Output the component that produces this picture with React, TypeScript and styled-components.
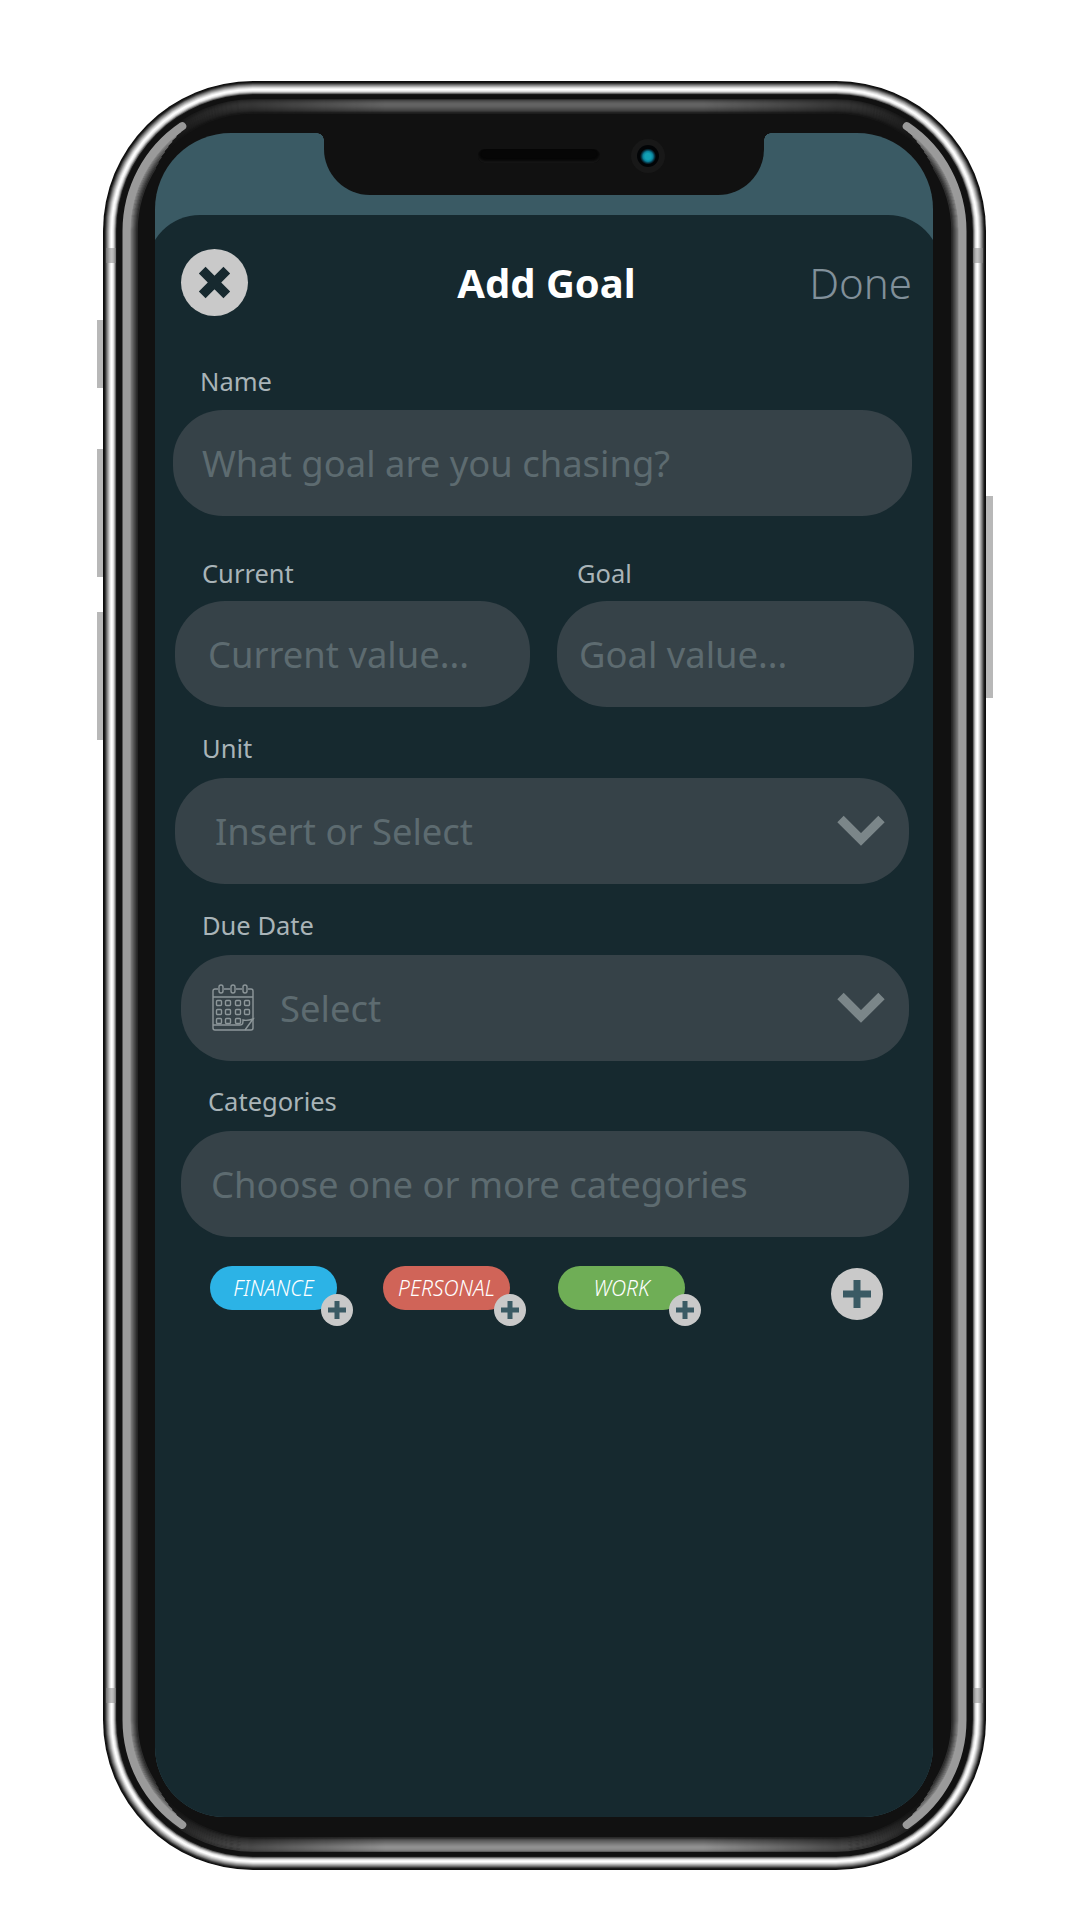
import styled, { createGlobalStyle } from 'styled-components'

const FONT = `'Noto Sans', 'Liberation Sans', sans-serif`

const GlobalStyle = createGlobalStyle`
  html, body {
    margin: 0;
    background: #fff;
  }
  * {
    box-sizing: border-box;
  }
`

const W = 883
const H = 1789
const R = 150

const rimColors = [
  '#0c0c0c', '#181818', '#3a3a3a', '#666666', '#8c8c8c', '#b0b0b0', '#d4d4d4', '#eeeeee',
  '#ffffff', '#f4f4f4', '#dcdcdc', '#aaaaaa', '#6a6a6a', '#1a1a1a',
]
const topBand = ['#3c3c3c', '#4c4c4c', '#585858', '#626262', '#686868', '#6a6a6a', '#686868', '#646464', '#5e5e5e', '#565656', '#4e4e4e', '#444444', '#343434', '#222222']
const bottomBand = ['#7a7a7a', '#868686', '#929292', '#989898', '#9a9a9a', '#969696', '#8e8e8e', '#868686', '#7c7c7c', '#727272', '#686868', '#5c5c5c', '#4c4c4c', '#333333']

function sidePath(i: number, theta: number, right: boolean) {
  const r = R - i
  const a = (theta * Math.PI) / 180
  const dx = R - r * Math.sin(a)
  const dy = r * Math.cos(a)
  const x = (v: number) => (right ? W - v : v)
  const sweep = right ? 1 : 0
  return `M${x(dx)} ${R - dy} A${r} ${r} 0 0 ${sweep} ${x(i)} ${R} L${x(i)} ${H - R} A${r} ${r} 0 0 ${sweep} ${x(dx)} ${H - R + dy}`
}

// dark falloff towards the glass, each layer a little shorter so it melts into the corner
function falloffLayers() {
  const out = []
  for (let k = 0; k < 8; k++) {
    const v = 150 - k * 15
    out.push({ i: 27 + k, color: `rgb(${v},${v},${v})`, theta: 36 + k * 3 })
  }
  return out
}

function PhoneBody() {
  const layers = falloffLayers()
  return (
    <Chrome viewBox={`0 0 ${W} ${H}`} width={W} height={H}>
      <defs>
        <linearGradient id="bandFade" gradientUnits="userSpaceOnUse" x1="0" y1="0" x2={W} y2="0">
          <stop offset="0.06" stopColor="#000" />
          <stop offset="0.1" stopColor="#333" />
          <stop offset="0.32" stopColor="#fff" />
          <stop offset="0.68" stopColor="#fff" />
          <stop offset="0.9" stopColor="#333" />
          <stop offset="0.94" stopColor="#000" />
        </linearGradient>
        <mask id="band" maskUnits="userSpaceOnUse" x="0" y="0" width={W} height={H}>
          <rect width={W} height={H} fill="url(#bandFade)" />
        </mask>
        <clipPath id="topHalf">
          <rect width={W} height={H / 2} />
        </clipPath>
        <clipPath id="bottomHalf">
          <rect y={H / 2} width={W} height={H / 2} />
        </clipPath>
      </defs>
      {rimColors.map((c, i) => (
        <rect key={i} x={i} y={i} width={W - 2 * i} height={H - 2 * i} rx={R - i} fill={c} />
      ))}
      <rect x="14" y="14" width={W - 28} height={H - 28} rx={R - 14} fill="#111" />
      <g mask="url(#band)">
        <g clipPath="url(#topHalf)">
          {topBand.map((c, k) => (
            <rect key={k} x={19 + k} y={19 + k} width={W - 38 - 2 * k} height={H - 38 - 2 * k} rx={R - 19 - k} fill="none" stroke={c} strokeWidth="1.4" />
          ))}
        </g>
        <g clipPath="url(#bottomHalf)">
          {bottomBand.map((c, k) => (
            <rect key={k} x={19 + k} y={19 + k} width={W - 38 - 2 * k} height={H - 38 - 2 * k} rx={R - 19 - k} fill="none" stroke={c} strokeWidth="1.4" />
          ))}
        </g>
      </g>
      {layers.map((l) => (
        <g key={l.i} fill="none" stroke={l.color} strokeWidth="1.5">
          <path d={sidePath(l.i, l.theta, false)} />
          <path d={sidePath(l.i, l.theta, true)} />
        </g>
      ))}
      <g fill="none" stroke="#9a9a9a" strokeWidth="8" strokeLinecap="round">
        <path d={sidePath(23.5, 34, false)} />
        <path d={sidePath(23.5, 34, true)} />
      </g>
      <g fill="#8a8a8a" opacity="0.55">
        <rect x="3" y="167" width="10" height="15" />
        <rect x={W - 13} y="167" width="10" height="15" />
        <rect x="3" y="1607" width="10" height="15" />
        <rect x={W - 13} y="1607" width="10" height="15" />
      </g>
    </Chrome>
  )
}

function CloseIcon() {
  return (
    <svg width="67" height="67" viewBox="0 0 67 67">
      <path d="M21.2 21.2 L45.8 45.8 M45.8 21.2 L21.2 45.8" stroke="#17292f" strokeWidth="9.5" fill="none" />
    </svg>
  )
}

function PlusIcon({ size, bar }: { size: number; bar: number }) {
  const c = size / 2
  return (
    <svg width={size} height={size} viewBox={`0 0 ${size} ${size}`}>
      <path d={`M${c} 0 V${size} M0 ${c} H${size}`} stroke="#3a5a64" strokeWidth={bar} fill="none" />
    </svg>
  )
}

function Chevron() {
  return (
    <ChevronSvg width="48" height="32" viewBox="0 0 48 32">
      <path d="M3.5 4 L24 24.5 L44.5 4" stroke="#7b8689" strokeWidth="9" fill="none" />
    </ChevronSvg>
  )
}

function CalendarIcon() {
  const cols = [7, 16, 26, 35]
  const rows = [17, 26, 35]
  return (
    <CalendarSvg width="44" height="48" viewBox="-1 -2 44 48" fill="none" stroke="#8d979a" strokeWidth="1.4">
      <path d="M6 3 H3 a2 2 0 0 0 -2 2 V42 a2 2 0 0 0 2 2 H39 a2 2 0 0 0 2 -2 V5 a2 2 0 0 0 -2 -2 H36" />
      <path d="M12 3 H18 M24 3 H30" />
      <rect x="7" y="-1" width="4" height="8" rx="2" />
      <rect x="19" y="-1" width="4" height="8" rx="2" />
      <rect x="31" y="-1" width="4" height="8" rx="2" />
      <path d="M1 11 H41" />
      {rows.map((y) =>
        cols.slice(0, y === 35 ? 3 : 4).map((x) => <rect key={`${x}-${y}`} x={x - 2.5} y={y - 2.5} width="5" height="5" rx="1" />),
      )}
      <path d="M1 39 H28 C31 39 31 37 31 34 C35 35 38 34 41 33 L33 44" />
    </CalendarSvg>
  )
}

const chips = [
  { label: 'FINANCE', color: '#2cb3e6', shift: 0 },
  { label: 'PERSONAL', color: '#d06458', shift: 0 },
  { label: 'WORK', color: '#6fae56', shift: 2 },
]

export default function App() {
  return (
    <Page>
      <GlobalStyle />
      <Phone>
        <SideButton $side="left" $top={239} $height={68} />
        <SideButton $side="left" $top={368} $height={128} />
        <SideButton $side="left" $top={531} $height={128} />
        <SideButton $side="right" $top={415} $height={202} />
        <PhoneBody />
        <Screen>
          <Notch>
            <Speaker />
            <Camera>
              <Lens />
            </Camera>
          </Notch>
          <Sheet>
            <Header>
              <CloseButton>
                <CloseIcon />
              </CloseButton>
              <Title>Add Goal</Title>
              <Done>Done</Done>
            </Header>
            <Form>
              <Field $left={0} $width={739} $top={50} $gap={14}>
                <Label $indent={27}>Name</Label>
                <Input>
                  <Placeholder $pad={29}>What goal are you chasing?</Placeholder>
                </Input>
              </Field>
              <Row>
                <Field $left={2} $width={355} $top={0} $gap={13}>
                  <Label $indent={27}>Current</Label>
                  <Input>
                    <Placeholder $pad={33}>Current value...</Placeholder>
                  </Input>
                </Field>
                <Field $left={27} $width={357} $top={0} $gap={13}>
                  <Label $indent={20}>Goal</Label>
                  <Input>
                    <Placeholder $pad={22}>Goal value...</Placeholder>
                  </Input>
                </Field>
              </Row>
              <Field $left={2} $width={734} $top={26} $gap={15}>
                <Label $indent={27}>Unit</Label>
                <Input>
                  <Placeholder $pad={40}>Insert or Select</Placeholder>
                  <Chevron />
                </Input>
              </Field>
              <Field $left={8} $width={728} $top={26} $gap={15}>
                <Label $indent={21}>Due Date</Label>
                <Input>
                  <CalendarIcon />
                  <Placeholder $pad={25}>Select</Placeholder>
                  <Chevron />
                </Input>
              </Field>
              <Field $left={8} $width={728} $top={25} $gap={15}>
                <Label $indent={27}>Categories</Label>
                <Input>
                  <Placeholder $pad={30}>Choose one or more categories</Placeholder>
                </Input>
              </Field>
              <ChipRow>
                {chips.map((c) => (
                  <Chip key={c.label} $color={c.color} $shift={c.shift}>
                    {c.label}
                    <ChipBadge>
                      <PlusIcon size={18} bar={5} />
                    </ChipBadge>
                  </Chip>
                ))}
                <AddButton>
                  <PlusIcon size={28} bar={7} />
                </AddButton>
              </ChipRow>
            </Form>
          </Sheet>
        </Screen>
      </Phone>
    </Page>
  )
}

const Page = styled.div`
  width: 1080px;
  height: 1920px;
  padding: 81px 0 0 103px;
  background: #fff;
  overflow: hidden;
  font-family: ${FONT};
`

const Phone = styled.div`
  position: relative;
  width: ${W}px;
  height: ${H}px;
  padding: 52px 53px 53px 52px;
  display: flex;
`

const Chrome = styled.svg`
  position: absolute;
  left: 0;
  top: 0;
`

const SideButton = styled.div<{ $side: 'left' | 'right'; $top: number; $height: number }>`
  position: absolute;
  ${(p) => (p.$side === 'left' ? 'left: -6px;' : 'right: -7px;')}
  top: ${(p) => p.$top}px;
  width: 7px;
  height: ${(p) => p.$height}px;
  background: #b8b8b8;
`

const Screen = styled.div`
  position: relative;
  flex: 1;
  display: flex;
  padding-top: 82px;
  background: #3a5a64;
  border-radius: 76px 76px 70px 70px;
  overflow: hidden;
`

const Notch = styled.div`
  position: absolute;
  top: 0;
  left: 169px;
  width: 440px;
  height: 62px;
  background: #111;
  border-radius: 0 0 46px 46px;
  z-index: 1;

  &::before,
  &::after {
    content: '';
    position: absolute;
    top: 0;
    width: 7px;
    height: 7px;
  }
  &::before {
    left: -7px;
    background: radial-gradient(circle at 0 100%, transparent 6.5px, #111 7px);
  }
  &::after {
    right: -7px;
    background: radial-gradient(circle at 100% 100%, transparent 6.5px, #111 7px);
  }
`

const Speaker = styled.div`
  position: absolute;
  left: 154px;
  top: 16px;
  width: 122px;
  height: 14px;
  border-radius: 7px;
  background: #060606;
  box-shadow: inset 0 -2px 3px #181818;
`

const Camera = styled.div`
  position: absolute;
  left: 307px;
  top: 6px;
  width: 34px;
  height: 34px;
  padding: 6px;
  border-radius: 50%;
  background: #181818;
`

const Lens = styled.div`
  width: 22px;
  height: 22px;
  border-radius: 50%;
  background: radial-gradient(circle at 50% 52%, #12a0b4 0 3px, #0b7f98 5px, #06394a 6.5px, #020406 8px);
`

const Sheet = styled.div`
  flex: 1;
  margin: 0 -8px;
  display: flex;
  flex-direction: column;
  background: #16292f;
  border-radius: 53px 53px 0 0;
`

const Header = styled.div`
  display: grid;
  grid-template-columns: 1fr auto 1fr;
  align-items: center;
  padding: 34px 29px 0 34px;
`

const CloseButton = styled.div`
  width: 67px;
  height: 67px;
  border-radius: 50%;
  background: #c9c9c9;

  svg {
    display: block;
  }
`

const Title = styled.div`
  font-size: 40px;
  font-weight: 700;
  color: #fff;
`

const Done = styled.div`
  justify-self: end;
  font-size: 42px;
  font-weight: 300;
  color: #81909a;
`

const Form = styled.div`
  display: flex;
  flex-direction: column;
  padding-left: 26px;
`

const Row = styled.div`
  display: flex;
  margin-top: 42px;
`

const Field = styled.div<{ $left: number; $width: number; $top: number; $gap: number }>`
  display: flex;
  flex-direction: column;
  gap: ${(p) => p.$gap}px;
  margin-left: ${(p) => p.$left}px;
  margin-top: ${(p) => p.$top}px;
  width: ${(p) => p.$width}px;
`

const Label = styled.div<{ $indent: number }>`
  height: 30px;
  padding-left: ${(p) => p.$indent}px;
  font-size: 25.5px;
  line-height: 30px;
  color: #a9b4b8;
`

const Input = styled.div`
  display: flex;
  align-items: center;
  height: 106px;
  border-radius: 50px;
  background: #364248;
`

const Placeholder = styled.span<{ $pad: number }>`
  flex: 1;
  padding-left: ${(p) => p.$pad}px;
  font-size: 36.4px;
  color: #5d6b70;
  white-space: nowrap;
`

const ChevronSvg = styled.svg`
  flex: none;
  margin-right: 24px;
`

const CalendarSvg = styled.svg`
  flex: none;
  margin-left: 30px;
`

const ChipRow = styled.div`
  display: flex;
  align-items: flex-start;
  gap: 46px;
  width: 673px;
  margin: 29px 0 0 37px;
`

const Chip = styled.div<{ $color: string; $shift: number }>`
  position: relative;
  width: 127px;
  height: 44px;
  margin-left: ${(p) => p.$shift}px;
  border-radius: 22px;
  background: ${(p) => p.$color};
  color: #fff;
  font-size: 21px;
  font-style: italic;
  font-weight: 300;
  line-height: 44px;
  text-align: center;
`

const ChipBadge = styled.div`
  position: absolute;
  right: -16px;
  bottom: -16px;
  width: 32px;
  height: 32px;
  display: flex;
  align-items: center;
  justify-content: center;
  border-radius: 50%;
  background: #c9c9c9;
`

const AddButton = styled.div`
  width: 52px;
  height: 52px;
  margin: 2px 0 0 auto;
  display: flex;
  align-items: center;
  justify-content: center;
  border-radius: 50%;
  background: #c9c9c9;
`
